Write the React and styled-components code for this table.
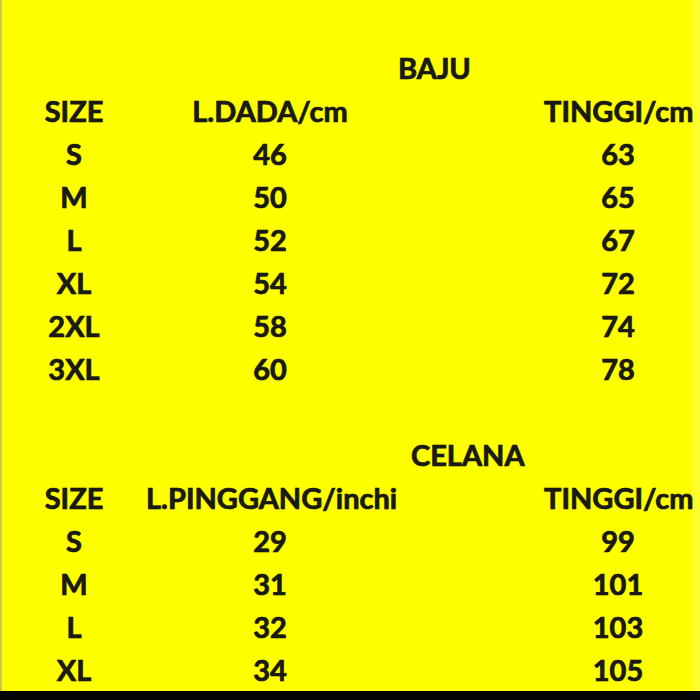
import React from "react";
import styled, { createGlobalStyle } from "styled-components";

const baju = [
  ["S", "46", "63"],
  ["M", "50", "65"],
  ["L", "52", "67"],
  ["XL", "54", "72"],
  ["2XL", "58", "74"],
  ["3XL", "60", "78"],
];

const celana = [
  ["S", "29", "99"],
  ["M", "31", "101"],
  ["L", "32", "103"],
  ["XL", "34", "105"],
];

const SizeBlock = ({ title, titleOffset, measure, rows }) => (
  <Block>
    <TitleRow $offset={titleOffset}>{title}</TitleRow>
    <Row>
      <Cell>SIZE</Cell>
      <Cell>{measure}</Cell>
      <Cell $last>TINGGI/cm</Cell>
    </Row>
    {rows.map(([size, width, height]) => (
      <Row key={size}>
        <Cell>{size}</Cell>
        <Cell>{width}</Cell>
        <Cell $last>{height}</Cell>
      </Row>
    ))}
  </Block>
);

const App = () => (
  <>
    <GlobalStyle />
    <Page>
      <Sheet>
        <SizeBlock
          title="BAJU"
          titleOffset={398}
          measure="L.DADA/cm"
          rows={baju}
        />
        <Spacer />
        <SizeBlock
          title="CELANA"
          titleOffset={411}
          measure="L.PINGGANG/inchi"
          rows={celana}
        />
      </Sheet>
      <BottomBar />
    </Page>
  </>
);

export default App;

const GlobalStyle = createGlobalStyle`
  html, body {
    margin: 0;
    padding: 0;
    background: #ffff00;
  }
`;

const Page = styled.div`
  width: 700px;
  height: 700px;
  display: flex;
  flex-direction: column;
  overflow: hidden;
  font-family: Lato, "Open Sans", sans-serif;
  font-weight: 700;
  color: #1a1a12;
  -webkit-text-stroke: 0.6px #1a1a12;
  text-shadow: 0 0 1px rgba(40, 40, 20, 0.6);
`;

const Sheet = styled.div`
  flex: 1;
  padding-top: 46px;
  background: #ffff00;
  border-left: 2px solid #c9c94a;
  border-right: 8px solid #fdfd2e;
  box-sizing: border-box;
`;

const Block = styled.div`
  display: flex;
  flex-direction: column;
`;

const TitleRow = styled.div`
  height: 43px;
  line-height: 43px;
  font-size: 29px;
  padding-left: ${(p) => p.$offset - 2}px;
`;

const Row = styled.div`
  display: grid;
  grid-template-columns: 144px 248px 150px 148px;
  height: 43px;
  align-items: center;
  font-size: 29px;
`;

const Cell = styled.div`
  text-align: center;
  white-space: nowrap;
  grid-column: ${(p) => (p.$last ? 4 : "auto")};
`;

const Spacer = styled.div`
  height: 43px;
`;

const BottomBar = styled.div`
  height: 10px;
  background: #050505;
`;
